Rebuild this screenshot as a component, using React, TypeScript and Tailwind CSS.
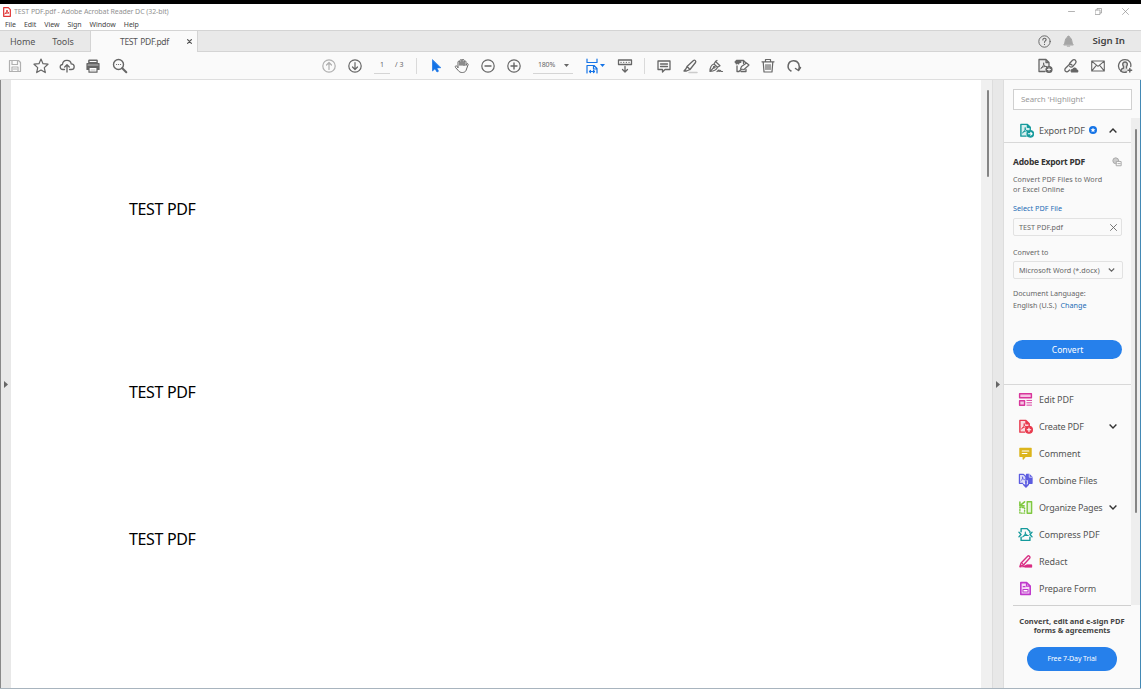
import type { ReactNode } from 'react';

type IconProps = { children: ReactNode; className?: string; box?: string };

function Icon({ children, className = 'w-4 h-4', box = '0 0 16 16' }: IconProps) {
  return (
    <svg
      className={`shrink-0 ${className}`}
      viewBox={box}
      fill="none"
      stroke="currentColor"
      strokeWidth="1.2"
      strokeLinecap="round"
      strokeLinejoin="round"
    >
      {children}
    </svg>
  );
}

function Tool({ children, className = '' }: { children: ReactNode; className?: string }) {
  return (
    <button type="button" className={`flex w-[26px] shrink-0 items-center justify-center ${className}`}>
      <Icon>{children}</Icon>
    </button>
  );
}

function Caret({ className = '' }: { className?: string }) {
  return (
    <svg className={`h-[3px] w-[5px] shrink-0 ${className}`} viewBox="0 0 5 3" fill="currentColor">
      <path d="M0 0h5L2.500 3z" />
    </svg>
  );
}

function Chevron({ up = false, className = 'w-2 h-[5px]' }: { up?: boolean; className?: string }) {
  return (
    <svg className={`shrink-0 ${className}`} viewBox="0 0 8 5" fill="none" stroke="currentColor" strokeWidth="1.4">
      <path d={up ? 'M.6 4.400 4 1l3.400 3.400' : 'M.6.6 4 4 7.400.6'} />
    </svg>
  );
}

// the Acrobat mark, drawn inside a page outline
const acrobatMark = 'M4 10.300C5.500 9.300 7.300 6.500 6.600 4.800 6 6.700 8 8.700 9.800 8.600 7.700 8.200 5.500 8.800 4 10.300';

const TOOLS: { name: string; color: string; expandable?: boolean; icon: ReactNode }[] = [
  {
    name: 'Edit PDF',
    color: 'text-[#d8359b]',
    icon: (
      <>
        <path d="M1.700 1.800h12.600v4.400H1.700zM1.700 9.300h5.300v4.900H1.700z" strokeWidth="1.500" fill="#f5c4e2" />
        <path d="M9.500 9h5M9.500 11.500h5M9.500 14h5" strokeWidth="1" />
      </>
    ),
  },
  {
    name: 'Create PDF',
    color: 'text-[#e8384c]',
    expandable: true,
    icon: (
      <>
        <path d="M7 14H2V1.500h6.500L12 5v2.500M8.500 1.500V5H12" strokeWidth="1.500" fill="#fad9dc" />
        <path d={acrobatMark} strokeWidth="1" />
        <circle cx="11.700" cy="11.500" r="3.700" fill="currentColor" />
        <path d="M9.800 11.500h3.800M11.700 9.600v3.800" stroke="white" />
      </>
    ),
  },
  {
    name: 'Comment',
    color: 'text-[#dcb51c]',
    icon: (
      <>
        <path d="M2 2.500h12v8.500H8L5.500 14v-3H2z" fill="currentColor" />
        <path d="M4.500 5.300h7M4.500 8h5" stroke="white" />
      </>
    ),
  },
  {
    name: 'Combine Files',
    color: 'text-[#5c5ce0]',
    icon: (
      <>
        <path d="M5 11H1.500V1.500h4.300L8.500 4v6.500" strokeWidth="1.300" fill="#dcdcf8" />
        <path d="M3 8.500C4.500 7.300 5.500 5.500 4.800 4 4.700 6 5.700 7.200 7 7.200" strokeWidth=".9" />
        <path d="M9 1.500h3L15 4.500V11h-4V7H9z" fill="currentColor" />
        <path d="M12 1.500v3h3" stroke="white" strokeWidth=".7" />
        <path d="M8.500 9v5.500M6 12.300l2.500 2.500 2.500-2.500" strokeWidth="1.700" />
      </>
    ),
  },
  {
    name: 'Organize Pages',
    color: 'text-[#7fc840]',
    expandable: true,
    icon: (
      <>
        <path d="M9.800 1.800h4.700v12.400H9.800z" strokeWidth="1.500" fill="#e5f5d9" />
        <path d="M2 8h5v6H2z" strokeDasharray="1 1.700" strokeWidth="1.500" />
        <path d="M7 2 2.500 5.800M2 2.300v4h4.500" strokeWidth="1.700" />
      </>
    ),
  },
  {
    name: 'Compress PDF',
    color: 'text-[#159a9c]',
    icon: (
      <>
        <path d="M3.300 5V1.700h6.200l3.200 3V6M3.300 11v3.300h9.400V11" strokeWidth="1.500" />
        <path d="M5 10.500c1.500-1 3.300-3.500 2.800-5.200-.6 1.900 1.400 3.800 3.200 3.700-2.100-.3-4.300.2-6 1.500" strokeWidth="1.100" />
        <path d="M1 5.500 3.200 8 1 10.500M15 5.500 12.800 8l2.200 2.500" strokeWidth="1.500" />
      </>
    ),
  },
  {
    name: 'Redact',
    color: 'text-[#d92d83]',
    icon: (
      <>
        <path d="m3.300 9.500 7-7.200c1-1 3.200.8 2.300 2l-6.800 7.400L2 13.600z" strokeWidth="1.500" />
        <path d="m4 9.500 2 2" />
        <path d="M9 11.500h5.500V14H2z" fill="currentColor" stroke="none" />
        <path d="M9.500 11.800h5v2h-7z" fill="currentColor" />
      </>
    ),
  },
  {
    name: 'Prepare Form',
    color: 'text-[#c038cc]',
    icon: (
      <>
        <path d="M3 1.700h6.200L13 5.500v8.800H3z" strokeWidth="1.700" fill="#f5dcf7" />
        <path d="M9 2v3.500h3.700M5.500 6h2" strokeWidth="1.200" />
        <path d="M5.300 9h5.400v2.700H5.300z" strokeWidth="1.100" fill="white" />
      </>
    ),
  },
];

const MENUS = ['File', 'Edit', 'View', 'Sign', 'Window', 'Help'];

function TitleBar() {
  return (
    <header className="border-t-4 border-black bg-white">
      <div className="flex h-[14px] items-center pt-[2px] pl-[3px] text-[#929292]">
        <Icon className="h-[10px] w-[8px] text-[#e03434]" box="0 0 12 15">
          <path d="M1 1h7l3 3v10H1z" strokeWidth="1.800" />
          <path d="M3 10c2-1 3.500-4 3-5.500-.6 2 1 4 3 4.500-2 0-4 0-6 1" strokeWidth="1.500" />
        </Icon>
        <span className="ml-[3px] pt-px text-[7px] tracking-[-0.09px] whitespace-nowrap">
          TEST PDF.pdf - Adobe Acrobat Reader DC (32-bit)
        </span>
        <div className="ml-auto flex items-center gap-[20px] pr-[12px] pb-px">
          <Icon className="h-[7px] w-[7px]" box="0 0 7 7"><path d="M.5 3.500h6" strokeWidth=".7" /></Icon>
          <Icon className="h-[7px] w-[7px]" box="0 0 7 7">
            <path d="M.5 2h4.500v4.500H.5zM2 2V.5h4.500V5H5" strokeWidth=".7" />
          </Icon>
          <Icon className="h-[7px] w-[7px]" box="0 0 7 7"><path d="m.5.5 6 6m0-6-6 6" strokeWidth=".7" /></Icon>
        </div>
      </div>
      <nav className="flex h-[12px] items-center gap-[8px] pt-[3px] pl-[5px] text-[7px] tracking-[-0.05px] text-[#444]">
        {MENUS.map((menu) => (
          <span key={menu}>{menu}</span>
        ))}
      </nav>
    </header>
  );
}

function TabBar() {
  return (
    <div className="flex h-[22px] border-y border-[#d4d4d4] bg-[#e9e9e9] text-[9px] text-[#555]">
      <div className="flex w-[91px] items-center gap-[17px] border-r border-[#d4d4d4] pt-px pl-[10px] tracking-[-0.1px]">
        <span>Home</span>
        <span>Tools</span>
      </div>
      <div className="-mb-px flex w-[107px] items-center border-r border-[#d4d4d4] bg-[#fafafa] pl-[29px] text-[8.500px]">
        <span className="pt-px tracking-[-0.35px] whitespace-nowrap [word-spacing:1px]">TEST PDF.pdf</span>
        <Icon className="mr-[5px] ml-auto h-[5px] w-[5px]" box="0 0 5 5">
          <path d="m.6.6 3.800 3.800m0-3.800L.6 4.400" />
        </Icon>
      </div>
      <div className="ml-auto flex items-center pr-[16px]">
        <Icon className="h-[13px] w-[13px] text-[#666]">
          <circle cx="8" cy="8" r="7" />
          <path d="M6 6c0-2.800 4-2.500 4-.2C10 7.300 8 7.300 8 9M8 11.500v.1" strokeWidth="1.400" />
        </Icon>
        <Icon className="ml-[11px] h-[13px] w-[13px] text-[#a5a5a5]">
          <path d="M2.500 12c2-2 .5-8 4-9C6.500.8 9.500.8 9.500 3c3.500 1 2 7 4 9zM6.500 13.700h3" fill="currentColor" />
        </Icon>
        <span className="ml-[17px] pt-px text-[9.700px] font-semibold text-[#444]">Sign In</span>
      </div>
    </div>
  );
}

function Toolbar() {
  return (
    <div className="flex h-[28px] items-center border-b border-[#dedede] bg-[#fafafa] pl-[2px] text-[#666]">
      <Tool className="text-[#b0b0b0]">
        <path d="M2.500 2.500h9l2 2v9h-11zM5 2.500v4h5.500v-4M5 13.500V9h6v4.500M6.500 11h3" />
      </Tool>
      <Tool><path d="m8 1 2 4.700 5 .5-3.700 3.400 1 5L8 12l-4.300 2.600 1-5L1 6.200l5-.5z" /></Tool>
      <Tool>
        <path d="M5.500 11.500H4c-3.800 0-3.500-5-.5-5 .3-5.500 8-5.500 8.700-.7 4 0 4 5.700 0 5.700h-1.700M8 14V7M5.700 9 8 6.700 10.300 9" strokeWidth="1.300" />
      </Tool>
      <Tool>
        <path d="M4 5V2h8v3M2 5.500h12v6h-2v-2H4v2H2z" fill="currentColor" />
        <path d="M4 2.500h8v2H4zM4 9.500h8v4.700H4z" fill="white" />
        <path d="M6 12h4M3 7h10" stroke="#bbb" />
      </Tool>
      <Tool className="ml-px">
        <circle cx="6.500" cy="6.500" r="5" strokeWidth="1.400" />
        <path d="m10.300 10.300 4 4" strokeWidth="2" />
        <path d="M4.500 6.500h.1M6.500 6.500h.1M8.500 6.500h.1" />
      </Tool>
      <div className="ml-[182.500px] flex">
        <Tool className="text-[#b0b0b0]">
          <circle cx="8" cy="8" r="6.200" /><path d="M8 11.500v-7M5.500 7 8 4.500 10.500 7" />
        </Tool>
        <Tool>
          <circle cx="8" cy="8" r="6.200" /><path d="M8 4.500v7M5.500 9 8 11.500 10.500 9" />
        </Tool>
      </div>
      <div className="ml-[6.500px] flex h-[16px] items-center gap-[5px] text-[7px]">
        <span className="flex h-full w-[16px] items-center justify-center border-b border-[#d5d5d5]">1</span>
        <span className="w-[12px] whitespace-nowrap">/ 3</span>
      </div>
      <i className="ml-[9px] h-[16px] w-px bg-[#dadada]" />
      <div className="ml-[5.500px] flex">
        <Tool className="text-[#1473e6]"><path d="M4.500 2v11l2.500-2.300L9 14l1.500-.8-1.700-3.300 3.700-.2z" fill="currentColor" strokeWidth=".7" /></Tool>
        <Tool>
          <path d="M4 9.500V4c0-1.200 2-1.200 2 0v3.500V2.500c0-1.200 2-1.200 2 0v5V2.300c0-1.200 2-1.200 2 0v5.500-4c0-1.200 2-1.200 2 0v3.700l.5-1.500c.5-1 2-.5 1.600.7L12 12.500c-1 2.600-6 2.700-7.500.3L1.500 9.500c-1-1.300.7-2.200 1.500-1.300z" strokeWidth="1" />
        </Tool>
        <Tool><circle cx="8" cy="8" r="6.200" /><path d="M5 8h6" strokeWidth="1.400" /></Tool>
        <Tool><circle cx="8" cy="8" r="6.200" /><path d="M5 8h6M8 5v6" strokeWidth="1.400" /></Tool>
      </div>
      <div className="ml-[6.500px] flex h-[16px] w-[40px] items-center border-b border-[#d5d5d5] pl-[5px] text-[7px] tracking-[-0.2px]">
        <span>180%</span>
        <Caret className="mr-[4px] ml-auto" />
      </div>
      <div className="ml-[11px] flex items-center text-[#1473e6]">
        <Icon>
          <path d="M3 1v3.500h10V1M3 15V7.500h7l3 3V15M9.500 7.500V11H13M5.500 13.500h5M6.500 12.500l-1 1 1 1M9.500 12.500l1 1-1 1" strokeWidth="1.200" />
        </Icon>
        <Caret />
      </div>
      <Tool className="ml-[7px]">
        <path d="M1.500 2h13v4.500h-13zM4 4.300h.1M6.700 4.300h.1M9.300 4.300h.1M12 4.300h.1M8 8.500v5M5.500 11.500 8 14l2.500-2.500" strokeWidth="1.300" />
      </Tool>
      <i className="ml-[6px] h-[16px] w-px bg-[#dadada]" />
      <div className="ml-[6px] flex">
        <Tool><path d="M2 3h12v8.500H9L6.500 14v-2.500H2zM4.500 6h7M4.500 8.500h7" strokeWidth="1.300" /></Tool>
        <Tool>
          <path d="M7 14.500h8" stroke="#ccc" strokeWidth="1.500" />
          <path d="m5 8.500 6.500-6c1.200-1 3 .7 2 2L8 11.500 4.500 13H2l2-2.300zM5 8.500l3 3" strokeWidth="1.300" />
        </Tool>
        <Tool>
          <path d="M2 13.500c0-3 .5-6.500 4-7.500l3.500 3.200c-1 3.300-3.500 4-7.500 4.300zM2.300 13.200l3.500-3.700M6 6l1.500-2.500L12 7.700 9.500 9.200M7.500 3.500 9 2.500M9 13.500l2-1.500v1.500l1.500-1 .5 1h1.500" />
          <circle cx="6.300" cy="9.200" r=".8" />
        </Tool>
        <Tool>
          <path d="M2.500 3.500V2.500h7l4 4-2 2-5 3.500L5 13.500H3V8M9.500 2.500v3M7 13.500h5v-2" strokeWidth="1.300" />
          <path d="m6.500 11 1-2.500L12.500 5 15 7l-5 4.500z" fill="#fafafa" />
          <path d="M1.500 4h5M2.500 3v2.500M4.500 3v2.500" strokeWidth="2" />
        </Tool>
        <Tool><path d="M2 3.800h12M5.500 3.500v-2h5v2M3.200 4l.8 10h8l.8-10M6 6.500v5M8 6.500v5M10 6.500v5" /></Tool>
        <Tool><path d="M5 13C.3 10.500 1.500 3 7.500 2.700c5-.1 7 4.800 5 9.500M9.500 10.500l3 2 2-3" strokeWidth="1.500" /></Tool>
      </div>
      <div className="ml-auto flex gap-px pr-[3px]">
        <Tool>
          <path d="M8 13.500H2V1.500h7L12 4.500v4M9 1.500v3h3" strokeWidth="1.300" fill="#eee" />
          <path d={acrobatMark} strokeWidth="1" />
          <circle cx="12" cy="11.500" r="3" fill="currentColor" />
          <path d="M10.500 11.500h3M12 10v3" stroke="white" strokeWidth=".9" />
        </Tool>
        <Tool className="-ml-px">
          <path d="m6.500 5.500 3-3.200c2-2 4.700.8 3 3L10 8.200c-1 1-2.500 1-3.300.2M9 7c-1-.9-2.500-.8-3.500.2L2.500 10.300c-2 2.200 1 4.700 3 2.700l1-1" strokeWidth="1.300" />
          <path d="M8.500 14c-1.300-1.800.3-2.800 1.300-2.300.7-2.700 3.700-1.700 3.500.2 2 0 1.800 2.100.8 2.100z" fill="currentColor" />
        </Tool>
        <Tool><path d="M1.700 3h12.600v10H1.700zM2 3.300l6 5 6-5M2 12.700l4.500-5.500M14 12.700 9.500 7.200" strokeWidth="1.100" /></Tool>
        <Tool>
          <path d="M4 13C-.5 9.500 1.500 1.700 8 1.700c4.500 0 6.500 3.500 5.700 6.800" strokeWidth="1.300" />
          <path d="M3.500 12.700 4 11.300l2.300-1.200V8.800C4.500 6.500 5.200 3.700 8 3.700s3.500 2.800 1.700 5.100v1.300l1 .5v3c-2.200 1-5 .9-7.200-.9z" fill="currentColor" stroke="none" className="opacity-20" />
          <path d="m4 12.500.5-1.300 2-1V8.500c-1.300-2-1-4.500 1.500-4.500s3 2.500 1.500 4.500V10M4 13.200c1.700 1.200 3.700 1.400 5.500.8" strokeWidth="1.400" />
          <path d="M11 12.200h3.600M12.800 10.400V14" strokeWidth="1.500" />
        </Tool>
      </div>
    </div>
  );
}

function ExportPanel() {
  return (
    <section className="h-[242px] border-b border-[#d8d8d8] pt-[13px] pl-[9px] text-[7.200px] leading-[10px] text-[#666]">
      <div className="flex h-[11px] items-center justify-between pr-[9px]">
        <h2 className="text-[8.500px] font-bold tracking-[-0.22px] whitespace-nowrap text-[#333]">Adobe Export PDF</h2>
        <Icon className="h-[10px] w-[10px] text-[#aaa]" box="0 0 12 12">
          <circle cx="4.500" cy="4.500" r="3.500" fill="#ccc" />
          <path d="M5.500 5.500h5.500v5H5.500zM7 8h3" fill="white" />
        </Icon>
      </div>
      <p className="mt-[7px] tracking-[0.07px] whitespace-nowrap">Convert PDF Files to Word<br />or Excel Online</p>
      <a className="mt-[9px] block tracking-[0.04px] text-[#1a6cb5]">Select PDF File</a>
      <div className="mt-[5px] flex h-[18px] w-[109px] items-center justify-between rounded-xs border border-[#e2e2e2] pr-[4px] pl-[5px]">
        TEST PDF.pdf
        <Icon className="h-[7px] w-[7px]" box="0 0 7 7"><path d="m.5.5 6 6m0-6-6 6" strokeWidth=".9" /></Icon>
      </div>
      <p className="mt-[11px]">Convert to</p>
      <div className="mt-[4px] flex h-[18px] w-[110px] items-center justify-between rounded-xs border border-[#e2e2e2] pr-[7px] pl-[5px] tracking-[0.03px] whitespace-nowrap">
        Microsoft Word (*.docx)
        <Chevron className="h-[4px] w-[7px]" />
      </div>
      <p className="mt-[9px]">Document Language:</p>
      <p className="mt-[2px]">English (U.S.)<a className="ml-[4px] text-[#1a6cb5]">Change</a></p>
      <button type="button" className="mt-[30px] block h-[19px] w-[109px] rounded-full bg-[#2680eb] text-[8.500px] text-white">
        Convert
      </button>
    </section>
  );
}

function SidePanel() {
  return (
    <aside className="flex w-[136px] shrink-0 flex-col bg-[#fafafa]">
      <div className="mt-[9px] ml-[9px] flex h-[21px] w-[119px] items-center border border-[#d0d0d0] bg-white pl-[7px] text-[7.900px] tracking-[-0.06px] text-[#999]">
        Search 'Highlight'
      </div>
      <div className="mt-[8px] flex h-[487px]">
        <div className="w-[127px]">
          <div className="flex h-[25px] items-center border-b border-[#d8d8d8] pl-[15px] text-[9px] tracking-[-0.1px] text-[#555]">
            <Icon className="h-[15px] w-[15px] text-[#159a9c]">
              <path d="M7.500 14H2V1.500h7L12 4.500V7M9 1.500v3h3" strokeWidth="1.500" fill="#d5eeee" />
              <path d={acrobatMark} strokeWidth="1" />
              <circle cx="12" cy="11.500" r="3.500" fill="currentColor" />
              <path d="M10 11.500h4M12.500 10l1.500 1.500-1.500 1.500" stroke="white" />
            </Icon>
            <span className="ml-[5px] pt-px whitespace-nowrap">Export PDF</span>
            <svg className="ml-[4px] h-[8px] w-[8px]" viewBox="0 0 10 10">
              <circle cx="5" cy="5" r="5" fill="#1473e6" />
              <path d="m5 2 .9 2 2.200.2-1.700 1.400.5 2.200L5 6.700 3.100 7.800l.5-2.200-1.700-1.400 2.200-.2z" fill="white" />
            </svg>
            <Chevron up className="mr-[14px] ml-auto h-[5px] w-[8px] text-[#333]" />
          </div>
          <ExportPanel />
          <ul className="pt-px text-[9px] tracking-[-0.07px] text-[#555]">
            {TOOLS.map((tool) => (
              <li key={tool.name} className="flex h-[27px] items-center pl-[14px]">
                <Icon className={`h-[15px] w-[15px] ${tool.color}`}>{tool.icon}</Icon>
                <span className={`ml-[6px] whitespace-nowrap ${tool.expandable ? 'tracking-[-0.2px]' : ''}`}>{tool.name}</span>
                {tool.expandable && <Chevron className="mr-[14px] ml-auto h-[5px] w-[8px] text-[#333]" />}
              </li>
            ))}
          </ul>
        </div>
        <div className="flex w-[9px] justify-center bg-[#eee]">
          <div className="mt-[11px] h-[384px] w-[2px] rounded bg-[#858585]" />
        </div>
      </div>
      <div className="ml-[9px] flex w-[118px] flex-col items-center border-t border-[#d0d0d0] pt-[11px]">
        <p className="text-center text-[7.500px] leading-[9px] font-bold whitespace-nowrap text-[#444]">
          Convert, edit and e-sign PDF<br />forms &amp; agreements
        </p>
        <button type="button" className="mt-[12px] h-[24px] w-[90px] rounded-full bg-[#2680eb] text-[7px] tracking-[-0.1px] text-white">
          Free 7-Day Trial
        </button>
      </div>
    </aside>
  );
}

export default function App() {
  return (
    <div className="flex h-[689px] w-[1141px] flex-col overflow-hidden bg-white font-['Noto_Sans',sans-serif]">
      <TitleBar />
      <TabBar />
      <Toolbar />
      <main className="flex h-[609px] border-b border-[#a8b4be]">
        <div className="flex w-[11px] items-center justify-center border-l border-[#888] bg-[#e8e8e8]">
          <svg className="h-[7px] w-[4px]" viewBox="0 0 4 7" fill="#666"><path d="M0 0v7l4-3.500z" /></svg>
        </div>
        <article className="w-[970px] bg-white pt-[119px] pl-[118px] text-[16px] leading-[20px] tracking-[-0.35px] text-black">
          <p>TEST PDF</p>
          <p className="mt-[163px]">TEST PDF</p>
          <p className="mt-[127px]">TEST PDF</p>
        </article>
        <div className="flex w-[12px] justify-center border-r border-[#ddd] bg-[#f0f0f0]">
          <div className="mt-[10px] ml-[3px] h-[87px] w-[2px] rounded bg-[#858585]" />
        </div>
        <div className="flex w-[11px] items-center justify-center border-r border-[#ddd] bg-[#e8e8e8]">
          <svg className="h-[7px] w-[4px]" viewBox="0 0 4 7" fill="#666"><path d="M0 0v7l4-3.500z" /></svg>
        </div>
        <SidePanel />
        <div className="w-px bg-[#4389b5]" />
      </main>
    </div>
  );
}
